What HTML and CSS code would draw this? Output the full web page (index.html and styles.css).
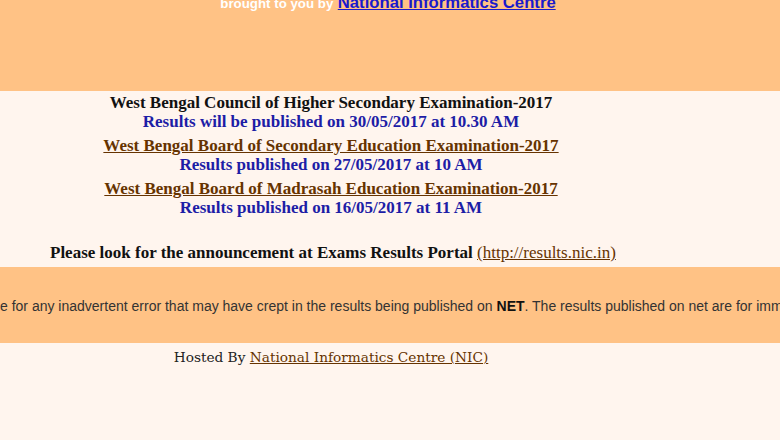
FILE: index.html
```html
<!DOCTYPE html>
<html>
<head>
<meta charset="utf-8">
<link rel="stylesheet" href="styles.css">
</head>
<body>
<div class="top">
  <p class="brought"><span class="by">brought to you by</span> <a class="nic" href="#">National Informatics Centre</a></p>
</div>
<div class="main">
  <div class="block">
    <div class="title">West Bengal Council of Higher Secondary Examination-2017</div>
    <div class="result">Results will be published on 30/05/2017 at 10.30 AM</div>
  </div>
  <div class="block">
    <a class="title link" href="#">West Bengal Board of Secondary Education Examination-2017</a>
    <div class="result">Results published on 27/05/2017 at 10 AM</div>
  </div>
  <div class="block">
    <a class="title link" href="#">West Bengal Board of Madrasah Education Examination-2017</a>
    <div class="result">Results published on 16/05/2017 at 11 AM</div>
  </div>
  <p class="look">Please look for the announcement at Exams Results Portal <a class="portal" href="#">(http://results.nic.in)</a></p>
</div>
<div class="band">
  <div class="marquee">e for any inadvertent error that may have crept in the results being published on <b>NET</b>. The results published on net are for immediate information to the examinees.</div>
</div>
<div class="footer">
  <span class="hosted">Hosted By <a class="nic-link" href="#">National Informatics Centre (NIC) </a></span>
</div>
</body>
</html>
```
FILE: styles.css
```css
html, body {
  margin: 0;
  padding: 0;
  background: #fff5ee;
  height: 100%;
  overflow: hidden;
}
.top {
  height: 91px;
  background: #ffc285;
  text-align: center;
  overflow: hidden;
  padding-right: 4px;
}
.brought {
  margin: -6px 0 0 0;
  font-family: "Liberation Sans", Arial, sans-serif;
  font-weight: bold;
  line-height: 18px;
}
.by {
  color: #ffffff;
  font-size: 13.3px;
}
.nic {
  color: #1a1acc;
  font-size: 16.7px;
}
.main {
  width: 662px;
  text-align: center;
  font-family: "Liberation Serif", "Times New Roman", serif;
  font-weight: bold;
  font-size: 17px;
  padding-top: 2px;
}
.block {
  display: flex;
  flex-direction: column;
  align-items: center;
  margin-bottom: 5px;
}
.title {
  color: #111111;
  line-height: 19px;
}
.link {
  color: #663300;
  text-decoration: underline;
}
.result {
  color: #1d1da6;
  line-height: 19px;
}
.look {
  text-align: left;
  padding-left: 50px;
  margin: 27px 0 0 0;
  color: #111111;
  line-height: 18px;
}
.portal {
  color: #663300;
  font-weight: normal;
}
.band {
  height: 76px;
  margin-top: 5px;
  background: #ffc285;
  display: flex;
  align-items: center;
  overflow: hidden;
}
.marquee {
  white-space: nowrap;
  font-family: "Liberation Sans", Arial, sans-serif;
  font-size: 14px;
  color: #333333;
  padding-top: 2px;
}
.marquee b {
  color: #111111;
}
.footer {
  width: 662px;
  text-align: center;
  padding-top: 6px;
  font-family: "DejaVu Serif", Georgia, serif;
  font-size: 13.7px;
  color: #222222;
}
.nic-link {
  color: #663300;
}
```
